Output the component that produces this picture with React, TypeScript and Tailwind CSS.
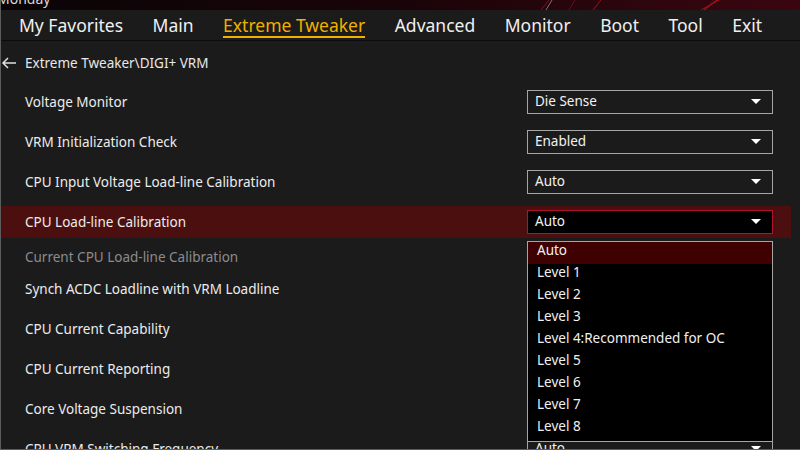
import React from "react";

const Caret = () => (
  <svg width="10" height="6" viewBox="0 0 10 6" className="shrink-0">
    <polygon points="0,0 10,0 5,5" fill="#ffffff" />
  </svg>
);

const Select = ({ value, active }: { value: string; active?: boolean }) => (
  <div
    className={
      active
        ? "w-[246px] h-[24px] border border-[#b0142e] bg-black flex items-center justify-between pl-[7px] pr-[11px] text-[13.5px] text-[#f2f2f2]"
        : "w-[246px] h-[24px] border border-[#a6a6a6] bg-[#1b1b1b] flex items-center justify-between pl-[7px] pr-[11px] text-[13.5px] text-[#f2f2f2]"
    }
  >
    <span className="leading-none">{value}</span>
    <Caret />
  </div>
);

const Row = ({
  label,
  value,
  h,
  active,
  dim,
}: {
  label: string;
  value?: string;
  h: string;
  active?: boolean;
  dim?: boolean;
}) => (
  <div
    className={
      (active ? "bg-[#4b0f10] " : "") +
      h +
      " w-[790px] shrink-0 flex items-center justify-between pl-[24px] pr-[18px]"
    }
  >
    <span className={dim ? "text-[13.5px] text-[#8c8c8c]" : "text-[13.5px] text-[#ececec]"}>{label}</span>
    {value ? <Select value={value} active={active} /> : null}
  </div>
);

export default function App() {
  const nav = ["My Favorites", "Main", "Extreme Tweaker", "Advanced", "Monitor", "Boot", "Tool", "Exit"];
  const opts = ["Auto", "Level 1", "Level 2", "Level 3", "Level 4:Recommended for OC", "Level 5", "Level 6", "Level 7", "Level 8"];
  return (
    <div
      className="relative w-[800px] h-[450px] overflow-hidden bg-[#1b1b1b] border-l border-b border-[#5c5c5c]"
      style={{ fontFamily: '"Noto Sans", "Open Sans", sans-serif' }}
    >
      {/* top strip */}
      <div className="relative h-[10px] bg-[#0a0406] overflow-hidden">
        <div className="absolute inset-0 bg-gradient-to-r from-[#0a0406] via-[#1a0409] to-[#3a0610]" />
        <svg className="absolute inset-0" width="800" height="10">
          <line x1="540" y1="10" x2="548" y2="0" stroke="#8a1020" strokeWidth="1" />
          <line x1="545" y1="10" x2="551" y2="0" stroke="#777" strokeWidth="1" />
          <line x1="568" y1="10" x2="574" y2="0" stroke="#6a0c18" strokeWidth="1" />
          <line x1="592" y1="10" x2="600" y2="0" stroke="#a0101c" strokeWidth="1" />
          <line x1="700" y1="10" x2="718" y2="0" stroke="#9a1220" strokeWidth="1" />
          <line x1="705" y1="10" x2="712" y2="0" stroke="#5a0a12" strokeWidth="1" />
          <line x1="703" y1="10" x2="716" y2="0" stroke="#c01622" strokeWidth="1" />
        </svg>
        <div className="absolute left-[-4px] top-[-12px] text-[14px] text-[#d8d8d8]">Monday</div>
      </div>
      {/* nav */}
      <div className="h-[31px] border-b border-[#0c0c0c] flex items-center gap-[29.5px] pl-[18px] pt-[2px]">
        {nav.map((n) =>
          n === "Extreme Tweaker" ? (
            <div key={n} className="relative text-[17.5px] text-[#f0b000] leading-none">
              {n}
              <div className="absolute left-0 right-0 top-[19px] h-[2px] bg-[#f0b000]" />
            </div>
          ) : (
            <div key={n} className="text-[17.5px] text-[#f0f0f0] leading-none">
              {n}
            </div>
          )
        )}
      </div>
      {/* breadcrumb */}
      <div className="h-[41px] flex items-center pt-[3px]">
        <svg width="16" height="12" viewBox="0 0 16 12" className="ml-[0px]">
          <path d="M15 6H2M7 1L2 6l5 5" stroke="#e0e0e0" strokeWidth="1.5" fill="none" />
        </svg>
        <span className="ml-[8px] text-[13.5px] text-[#e8e8e8]">Extreme Tweaker\DIGI+ VRM</span>
      </div>
      {/* rows */}
      <div className="flex flex-col">
        <Row label="Voltage Monitor" value="Die Sense" h="h-[40px]" />
        <Row label="VRM Initialization Check" value="Enabled" h="h-[40px]" />
        <Row label="CPU Input Voltage Load-line Calibration" value="Auto" h="h-[40px]" />
        <div className="h-[4px] shrink-0" />
        <Row label="CPU Load-line Calibration" value="Auto" h="h-[32px]" active />
        <Row label="Current CPU Load-line Calibration" h="h-[34px] pt-[4px]" dim />
        <Row label="Synch ACDC Loadline with VRM Loadline" value="Auto" h="h-[30px] pt-[4px]" />
        <div className="h-[7px] shrink-0" />
        <Row label="CPU Current Capability" value="Auto" h="h-[40px]" />
        <Row label="CPU Current Reporting" value="Auto" h="h-[40px]" />
        <Row label="Core Voltage Suspension" value="Auto" h="h-[40px]" />
        <Row label="CPU VRM Switching Frequency" value="Auto" h="h-[40px]" />
      </div>
      {/* dropdown list */}
      <div className="absolute left-[526px] top-[241px] w-[246px] h-[201px] bg-black border border-[#a6a6a6] flex flex-col">
        {opts.map((o, i) => (
          <div
            key={o}
            className={
              (i === 0 ? "bg-[#3e0000] " : "") +
              "h-[22px] shrink-0 flex items-center pl-[9px] pb-[5px] text-[13.5px] text-[#f0f0f0]"
            }
          >
            {o}
          </div>
        ))}
      </div>
    </div>
  );
}
